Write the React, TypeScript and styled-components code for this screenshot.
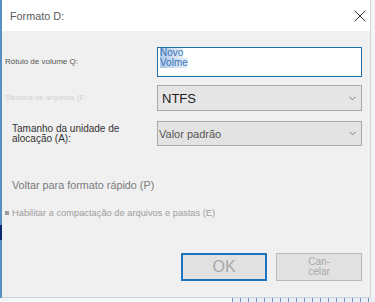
import React from "react";
import styled, { createGlobalStyle } from "styled-components";

const Global = createGlobalStyle`
  html, body { margin: 0; padding: 0; background: #f6f7f8; }
  body { font-family: "Liberation Sans", Arial, sans-serif; }
  #root { width: 375px; height: 302px; overflow: hidden; }
`;

const Page = styled.div`
  display: flex;
  flex-direction: column;
  width: 375px;
  height: 302px;
`;

const Main = styled.div`
  display: flex;
  height: 298px;
`;

const LeftEdge = styled.div`
  width: 2px;
  background: linear-gradient(
    to bottom,
    #5a8fbf 0,
    #5a8fbf 225px,
    #0b2a6a 225px,
    #0b2a6a 240px,
    #5a8fbf 240px
  );
`;

const Window = styled.div`
  width: 368px;
  display: flex;
  flex-direction: column;
  background: #f0f0f0;
  border-right: 1px solid #cfd3d6;
  border-bottom: 1px solid #c9d3dc;
`;

const RightGap = styled.div`
  flex: 1;
  background: #f4f5f6;
`;

const TitleBar = styled.div`
  height: 31px;
  background: #ffffff;
  display: flex;
  align-items: center;
  justify-content: space-between;
  padding: 0 4px 0 8px;
  flex-shrink: 0;
`;

const Title = styled.span`
  font-size: 10.8px;
  color: #5a5a5a;
`;

const Body = styled.div`
  display: flex;
  flex-direction: column;
  padding: 16px 0 0 0;
  flex: 1;
`;

const Row = styled.div<{ $h: number; $mt: number }>`
  display: grid;
  grid-template-columns: 155px 205px;
  align-items: center;
  height: ${(p) => p.$h}px;
  margin-top: ${(p) => p.$mt}px;
`;

const Label = styled.div<{ $size: number; $color: string; $pl: number }>`
  font-size: ${(p) => p.$size}px;
  color: ${(p) => p.$color};
  padding-left: ${(p) => p.$pl}px;
  line-height: 10px;
`;

const TextBox = styled.div`
  height: 100%;
  box-sizing: border-box;
  border: 1.5px solid #1f6ea9;
  background: #ffffff;
  padding: 0 0 0 2px;
  display: flex;
  flex-direction: column;
`;

const Selected = styled.span`
  font-size: 10px;
  line-height: 10px;
  color: #3a72b8;
  width: fit-content;
  background: linear-gradient(to right, rgba(70, 130, 200, 0.45), rgba(120, 170, 220, 0.15));
`;

const Select = styled.div<{ $bg: string; $fs: number; $color: string; $pl: number }>`
  height: 100%;
  box-sizing: border-box;
  border: 1px solid #a9a9a9;
  background: ${(p) => p.$bg};
  display: flex;
  align-items: center;
  justify-content: space-between;
  padding: 0 5px 0 ${(p) => p.$pl}px;
  font-size: ${(p) => p.$fs}px;
  color: ${(p) => p.$color};
`;

const Chevron = () => (
  <svg width="7" height="5" viewBox="0 0 7 5">
    <path d="M0.5 0.8 L3.5 3.8 L6.5 0.8" fill="none" stroke="#777" strokeWidth="1" />
  </svg>
);

const Option = styled.div<{ $mt: number; $size: number; $color: string; $pl: number }>`
  margin-top: ${(p) => p.$mt}px;
  font-size: ${(p) => p.$size}px;
  color: ${(p) => p.$color};
  padding-left: ${(p) => p.$pl}px;
  display: flex;
  align-items: center;
  gap: 3px;
`;

const Bullet = styled.span`
  width: 4px;
  height: 4px;
  background: #9a9a9a;
`;

const Buttons = styled.div`
  display: flex;
  justify-content: flex-end;
  gap: 9px;
  padding-right: 8px;
  margin-top: 35px;
`;

const Button = styled.div<{ $primary?: boolean }>`
  width: 86px;
  height: 28px;
  box-sizing: border-box;
  background: #e1e1e1;
  border: ${(p) => (p.$primary ? "2px solid #1a73bd" : "1px solid #b9b9b9")};
  display: flex;
  align-items: center;
  justify-content: center;
  text-align: center;
  color: #a8a8a8;
  font-size: ${(p) => (p.$primary ? "16px" : "10px")};
  line-height: ${(p) => (p.$primary ? "1" : "10px")};
`;

const Strip = styled.div`
  height: 4px;
  display: flex;
`;

const StripPlain = styled.div`
  width: 232px;
  background: #f4f6f8;
`;

const StripGrid = styled.div`
  flex: 1;
  background: repeating-linear-gradient(
    to right,
    #6f8fb5 0,
    #6f8fb5 1px,
    #e6edf4 1px,
    #e6edf4 8px
  );
`;

const CloseIcon = () => (
  <svg width="12" height="12" viewBox="0 0 12 12">
    <path d="M0.5 0.5 L11.5 11.5 M11.5 0.5 L0.5 11.5" stroke="#333" strokeWidth="1" fill="none" />
  </svg>
);

export default function App() {
  return (
    <>
      <Global />
      <Page>
        <Main>
          <LeftEdge />
          <Window>
            <TitleBar>
              <Title>Formato D:</Title>
              <CloseIcon />
            </TitleBar>
            <Body>
              <Row $h={30} $mt={0}>
                <Label $size={8} $color="#555" $pl={3}>
                  Rótulo de volume Q:
                </Label>
                <TextBox>
                  <Selected>Novo</Selected>
                  <Selected>Volme</Selected>
                </TextBox>
              </Row>
              <Row $h={26} $mt={8}>
                <Label $size={7.7} $color="#d2d2d2" $pl={3}>
                  Sistema de arquivos (E:
                </Label>
                <Select $bg="#e5e5e5" $fs={13} $color="#1e1e1e" $pl={4}>
                  <span>NTFS</span>
                  <Chevron />
                </Select>
              </Row>
              <Row $h={25} $mt={10}>
                <Label $size={10} $color="#333" $pl={10}>
                  Tamanho da unidade de
                  <br />
                  alocação (A):
                </Label>
                <Select $bg="#e3e3e3" $fs={11} $color="#555" $pl={1}>
                  <span>Valor padrão</span>
                  <Chevron />
                </Select>
              </Row>
              <Option $mt={33} $size={10.8} $color="#7a7a7a" $pl={10}>
                Voltar para formato rápido (P)
              </Option>
              <Option $mt={17} $size={9.3} $color="#9e9e9e" $pl={3}>
                <Bullet />
                Habilitar a compactação de arquivos e pastas (E)
              </Option>
              <Buttons>
                <Button $primary>OK</Button>
                <Button>
                  Can-
                  <br />
                  celar
                </Button>
              </Buttons>
            </Body>
          </Window>
          <RightGap />
        </Main>
        <Strip>
          <StripPlain />
          <StripGrid />
        </Strip>
      </Page>
    </>
  );
}
